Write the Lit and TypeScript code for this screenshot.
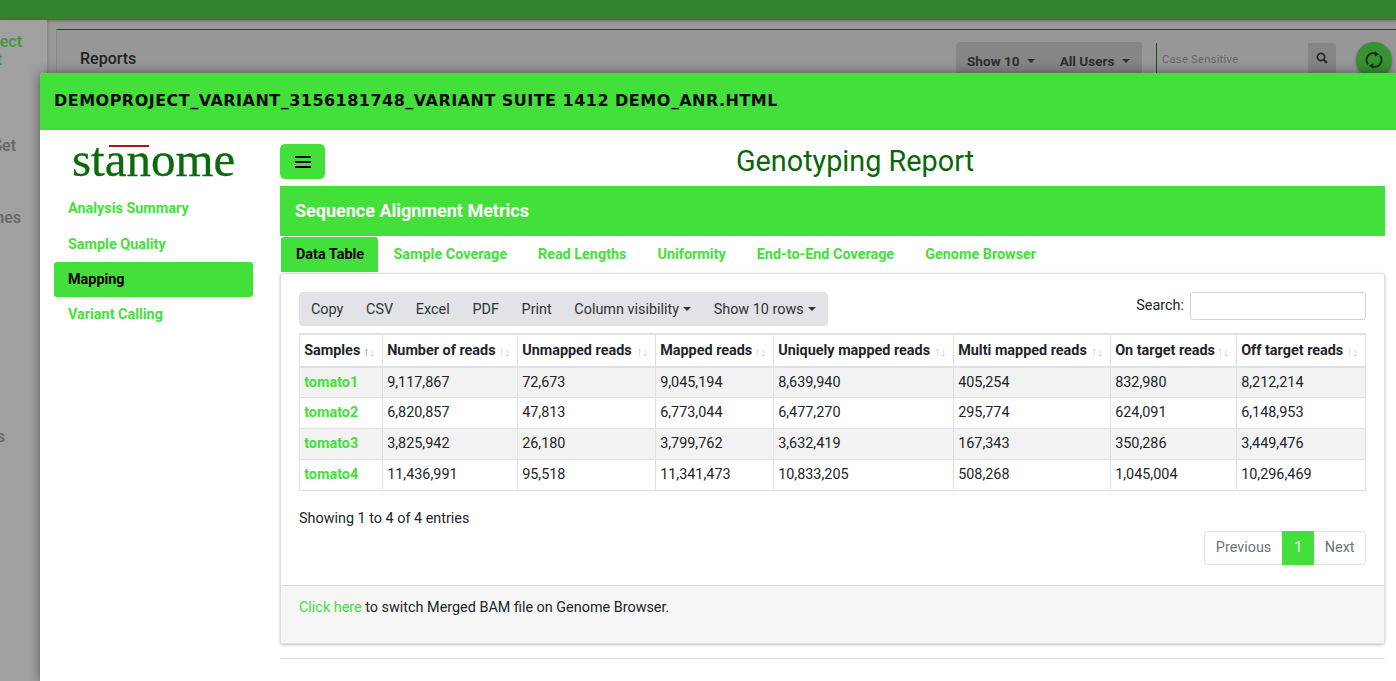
import { LitElement, html, css, svg } from "lit";
import { customElement } from "lit/decorators.js";

const cols = [
  ["Samples", 83], ["Number of reads", 135], ["Unmapped reads", 138], ["Mapped reads", 118],
  ["Uniquely mapped reads", 180], ["Multi mapped reads", 157], ["On target reads", 126], ["Off target reads", 129],
] as const;
const rows = [
  ["tomato1", "9,117,867", "72,673", "9,045,194", "8,639,940", "405,254", "832,980", "8,212,214"],
  ["tomato2", "6,820,857", "47,813", "6,773,044", "6,477,270", "295,774", "624,091", "6,148,953"],
  ["tomato3", "3,825,942", "26,180", "3,799,762", "3,632,419", "167,343", "350,286", "3,449,476"],
  ["tomato4", "11,436,991", "95,518", "11,341,473", "10,833,205", "508,268", "1,045,004", "10,296,469"],
];
const tabs = ["Data Table", "Sample Coverage", "Read Lengths", "Uniformity", "End-to-End Coverage", "Genome Browser"];
const nav = ["Analysis Summary", "Sample Quality", "Mapping", "Variant Calling"];

@customElement("app-root")
export class AppRoot extends LitElement {
  static styles = css`
    :host { display: block; position: relative; width: 1396px; height: 681px; overflow: hidden; background: #999; font-family: Roboto, "Liberation Sans", sans-serif; font-size: 14.4px; color: #212529; }
    * { box-sizing: border-box; }
    .bg { height: 681px; display: flex; flex-direction: column; }
    .topbar { height: 20px; background: #33832f; box-shadow: 0 1px 3px rgba(0,0,0,.3); flex: none; }
    .bgmain { flex: 1; display: flex; }
    .bgside { width: 47px; background: #a0a0a0; box-shadow: 1px 0 3px rgba(0,0,0,.15); position: relative; color: #666; font-size: 16px; font-weight: 500; }
    .bgside span { position: absolute; white-space: nowrap; }
    .bgside .g { color: #3d9a37; right: 25px; top: 12px; }
    .bgside .t { color: #3d9a37; right: 45px; top: 30px; }
    .bgside .a { top: 116px; right: 31px; }
    .bgside .b { top: 188px; right: 26px; }
    .bgside .c { top: 407px; right: 42px; }
    .bgpanel { flex: 1; margin: 9px 0 0 9px; border-top: 1px solid #155215; border-left: 1px solid #8a8a8a; display: flex; align-items: flex-start; padding: 12px 0 0 23px; background: #979797; }
    .reports { font-size: 16px; font-weight: 500; color: #222; margin-top: 7px; }
    .spacer { flex: 1; }
    .bgbtns { display: flex; gap: 25px; width: 186px; height: 40px; background: #868686; border-radius: 4px; padding: 11px 0 0 11px; font-size: 13.6px; font-weight: 700; color: #2e2e2e; margin-right: 14px; }
    .caret { display: inline-block; border: 4px solid transparent; border-top-color: currentColor; border-bottom: 0; margin-left: 7px; vertical-align: 3px; }
    .caret.near { margin-left: 4px; border-width: 4.3px 4.3px 0; }
    .bgsearch { display: flex; width: 180px; height: 40px; border-left: 1px solid #155215; background: #979797; margin-top: 1px; }
    .bgsearch .ph { flex: 1; font-size: 11.2px; color: #666; padding: 10px 5px; letter-spacing: .25px; }
    .bgsearch .s { width: 28px; background: #868686; border-radius: 0 3px 0 0; display: flex; align-items: center; justify-content: center; height: 30px; }
    .refresh { width: 36px; height: 36px; border-radius: 50%; background: #379233; margin: 0 4px 0 20px; display: flex; align-items: center; justify-content: center; box-shadow: 0 1px 3px rgba(0,0,0,.3); }

    .modal { position: absolute; left: 40px; top: 73px; width: 1356px; height: 608px; background: #fff; border-radius: 4px 0 0 0; box-shadow: 0 0 12px rgba(0,0,0,.45); }
    .mhead { height: 57px; background: #43df3b; border-radius: 4px 0 0 0; display: flex; align-items: center; padding: 0 0 2px 14px; font-family: "DejaVu Sans", sans-serif; font-weight: 700; font-size: 16px; letter-spacing: .48px; color: #0a0a0a; white-space: nowrap; }
    .mbody { display: flex; }
    .side { width: 240px; padding: 0 0 0 14px; flex: none; }
    .logo { height: 60px; width: 199px; position: relative; font-family: "Liberation Serif", serif; font-size: 49px; line-height: 60px; color: #0b6a0b; padding-left: 18px; -webkit-text-stroke: .3px #0b6a0b; }
    .logo i { position: absolute; left: 55px; top: 15px; width: 40px; height: 2px; background: #b0121b; }
    .nav { display: flex; flex-direction: column; width: 199px; }
    .nav a { height: 35px; line-height: 35px; padding-left: 14px; font-weight: 700; color: #43df3b; border-radius: 3px; white-space: nowrap; }
    .nav a:nth-child(-n+2) { height: 36px; line-height: 38px; }
    .nav a.on { background: #43df3b; color: #000; }
    .main { width: 1105px; padding-top: 14px; }
    .titlerow { height: 42px; display: flex; position: relative; }
    .ham { width: 45px; height: 35px; background: #43df3b; border-radius: 5px; display: flex; align-items: center; justify-content: center; }
    .title { flex: 1; text-align: center; font-size: 28.8px; line-height: 35px; color: #0b650b; }
    .bar { height: 50px; background: #43df3b; color: #fff; font-size: 18px; font-weight: 700; line-height: 50px; padding-left: 15px; }
    .tabs { display: flex; height: 37px; padding: 1px 0 0 1px; }
    .tabs a { padding: 0 15.5px; line-height: 36px; font-weight: 700; color: #43df3b; white-space: nowrap; height: 35px; }
    .tabs a.on { background: #43df3b; color: #000; border-radius: 3px 3px 0 0; padding: 0 15px; width: 97px; }
    .card { height: 371px; border: 1px solid #dfdfdf; border-radius: 3px; box-shadow: 0 1px 3px rgba(0,0,0,.25); display: flex; flex-direction: column; background: #fff; }
    .cbody { flex: 1; padding: 18px 18px 0; }
    .toolrow { display: flex; justify-content: space-between; align-items: flex-start; height: 41px; }
    .btns { display: flex; height: 34px; background: #e1e3e6; border-radius: 4px; padding-left: 12px; align-items: center; gap: 22.7px; width: 529px; white-space: nowrap; color: #303338; }
    .search { display: flex; align-items: flex-start; gap: 6px; line-height: 28px; }
    .search div { width: 176px; height: 28px; border: 1px solid #ced4da; border-radius: 3px; }
    table { border-collapse: collapse; table-layout: fixed; width: 1066px; }
    th, td { border: 1px solid #dee2e6; padding: 4px 0 4px 4.2px; text-align: left; white-space: nowrap; line-height: 21.7px; overflow: hidden; }
    th { font-weight: 700; border-bottom-width: 2px; border-top-width: 2px; position: relative; padding-top: 5px; }
    tbody tr:nth-child(odd) td { background: #f2f2f2; }
    td.s { color: #43df3b; font-weight: 700; }
    .sort { position: absolute; right: 7px; top: 10px; font-size: 13px; line-height: 14px; letter-spacing: -.5px; color: #c8ccd1; }
    .sort b { font-weight: 400; color: #7d8a99; }
    .info { margin-top: 19px; line-height: 17px; }
    .pager { display: flex; justify-content: flex-end; margin-top: 4px; }
    .pg { display: flex; height: 34px; border: 1px solid #dee2e6; border-radius: 4px; align-items: center; color: #6c757d; }
    .pg span { padding: 0 11px; line-height: 32px; }
    .pg span:last-child { padding: 0 10.5px; }
    .pg .one { background: #43df3b; color: #fff; height: 34px; line-height: 34px; width: 32px; padding: 0; text-align: center; margin: -1px 0; }
    .foot { height: 58px; background: #f6f6f6; border-top: 1px solid #dcdcdc; padding: 13px 18px; line-height: 17px; }
    .foot a { color: #43df3b; }
    .hr { height: 1px; background: #e0e0e4; margin-top: 14px; }
  `;

  render() {
    return html`
      <div class="bg">
        <div class="topbar"></div>
        <div class="bgmain">
          <div class="bgside">
            <span class="g">ect</span>
            <span class="t">t</span>
            <span class="a">Set</span>
            <span class="b">nes</span>
            <span class="c">s</span>
          </div>
          <div class="bgpanel">
            <div class="reports">Reports</div>
            <div class="spacer"></div>
            <div class="bgbtns"><span>Show 10<i class="caret"></i></span><span>All Users<i class="caret"></i></span></div>
            <div class="bgsearch">
              <div class="ph">Case Sensitive</div>
              <div class="s">
                <svg width="12" height="12" viewBox="0 0 12 12" fill="none" stroke="#2a2a2a" stroke-width="1.8"><circle cx="5" cy="5" r="3.6"/><path d="M7.8 7.8L11 11" stroke-width="2.2"/></svg>
              </div>
            </div>
            <div class="refresh">
              <svg width="18" height="18" viewBox="0 0 18 18" fill="none" stroke="#1c2b1c" stroke-width="1.8"><path d="M3 13.2A6.8 6.8 0 0 1 10.6 2.6"/><path d="M15 4.8A6.8 6.8 0 0 1 7.4 15.4"/><path d="M9.6 .2l4.6 3-4.6 2.6z" fill="#1c2b1c" stroke="none"/><path d="M8.4 17.8l-4.6-3 4.6-2.6z" fill="#1c2b1c" stroke="none"/></svg>
            </div>
          </div>
        </div>
      </div>

      <div class="modal">
        <div class="mhead">DEMOPROJECT_VARIANT_3156181748_VARIANT SUITE 1412 DEMO_ANR.HTML</div>
        <div class="mbody">
          <div class="side">
            <div class="logo">stanome<i></i></div>
            <div class="nav">
              ${nav.map((n) => html`<a class=${n === "Mapping" ? "on" : ""}>${n}</a>`)}
            </div>
          </div>
          <div class="main">
            <div class="titlerow">
              <div class="ham">
                <svg width="16" height="12" viewBox="0 0 16 12">${svg`<path d="M0 1h16M0 6h16M0 11h16" stroke="#000" stroke-width="2"/>`}</svg>
              </div>
              <div class="title">Genotyping Report</div>
            </div>
            <div class="bar">Sequence Alignment Metrics</div>
            <div class="tabs">
              ${tabs.map((t, i) => html`<a class=${i === 0 ? "on" : ""}>${t}</a>`)}
            </div>
            <div class="card">
              <div class="cbody">
                <div class="toolrow">
                  <div class="btns">
                    <span>Copy</span><span>CSV</span><span>Excel</span><span>PDF</span><span>Print</span>
                    <span>Column visibility<i class="caret near"></i></span>
                    <span>Show 10 rows<i class="caret near"></i></span>
                  </div>
                  <div class="search"><span>Search:</span><div></div></div>
                </div>
                <table>
                  <colgroup>${cols.map((c) => html`<col style="width:${c[1]}px" />`)}</colgroup>
                  <thead><tr>${cols.map((c, i) => html`<th>${c[0]}<span class="sort">${i === 0 ? html`<b>↑</b>` : "↑"}↓</span></th>`)}</tr></thead>
                  <tbody>
                    ${rows.map((r) => html`<tr>${r.map((v, i) => html`<td class=${i === 0 ? "s" : ""}>${v}</td>`)}</tr>`)}
                  </tbody>
                </table>
                <div class="info">Showing 1 to 4 of 4 entries</div>
                <div class="pager"><div class="pg"><span>Previous</span><span class="one">1</span><span>Next</span></div></div>
              </div>
              <div class="foot"><a>Click here</a> to switch Merged BAM file on Genome Browser.</div>
            </div>
            <div class="hr"></div>
          </div>
        </div>
      </div>
    `;
  }
}
